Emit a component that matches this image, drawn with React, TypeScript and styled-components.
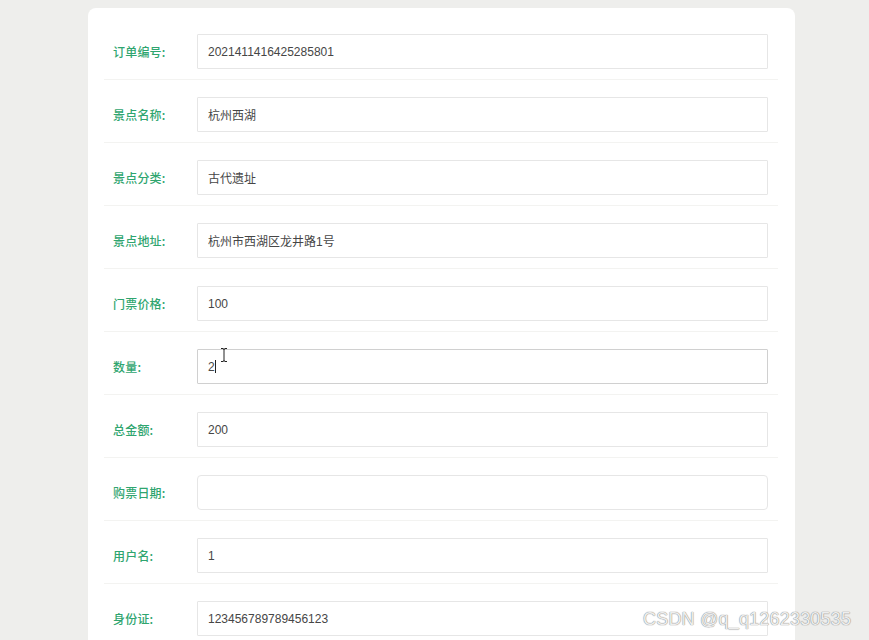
import React from "react";
import styled, { createGlobalStyle } from "styled-components";

const Global = createGlobalStyle`
  html, body {
    margin: 0;
    padding: 0;
    background: #eeeeec;
  }
  body {
    font-family: "Liberation Sans", "Noto Sans CJK SC", Arial, sans-serif;
    overflow: hidden;
  }
`;

const Page = styled.div`
  position: relative;
  width: 869px;
  height: 640px;
  overflow: hidden;
  background: #eeeeec;
`;

const Card = styled.div`
  margin: 8px 0 0 88px;
  width: 707px;
  box-sizing: border-box;
  background: #ffffff;
  border-radius: 8px;
  padding: 9px 17px 0 16px;
  display: flex;
  flex-direction: column;
`;

const Row = styled.div`
  display: flex;
  align-items: center;
  padding: 17px 10px 10px 9px;
  border-bottom: 1px solid #f3f3f1;
`;

const Label = styled.div`
  width: 84px;
  flex: none;
  font-family: "Noto Sans CJK SC", "Liberation Sans", sans-serif;
  font-size: 12px;
  font-weight: 500;
  color: #2fa56f;
  letter-spacing: 0.2px;
  margin-top: -1px;
`;

const Field = styled.div<{ $active?: boolean; $round?: boolean }>`
  position: relative;
  flex: 1;
  height: 35px;
  box-sizing: border-box;
  border: 1px solid ${(p) => (p.$active ? "#d0d0d0" : "#e6e6e6")};
  border-radius: ${(p) => (p.$round ? "4px" : "1px")};
  padding: 0 10px;
  display: flex;
  align-items: center;
  font-family: "Liberation Sans", "Noto Sans CJK SC", sans-serif;
  font-size: 12px;
  color: #464646;
  background: #fff;
`;

const Caret = styled.span`
  display: inline-block;
  width: 1px;
  height: 13px;
  background: #222;
`;

const Cursor = styled.svg`
  position: absolute;
  left: 22px;
  top: -2px;
`;

const Watermark = styled.div`
  position: absolute;
  left: 643px;
  top: 609px;
  font-family: "Liberation Sans", Arial, sans-serif;
  font-size: 18px;
  color: rgba(245, 245, 245, 0.95);
  text-shadow: 0 0 1px #8a8a8a, 0 0 1px #8a8a8a;
  white-space: nowrap;
  letter-spacing: 0.2px;
`;

type Item = { label: string; value: string; active?: boolean; round?: boolean };

const items: Item[] = [
  { label: "订单编号:", value: "2021411416425285801" },
  { label: "景点名称:", value: "杭州西湖" },
  { label: "景点分类:", value: "古代遗址" },
  { label: "景点地址:", value: "杭州市西湖区龙井路1号" },
  { label: "门票价格:", value: "100" },
  { label: "数量:", value: "2", active: true },
  { label: "总金额:", value: "200" },
  { label: "购票日期:", value: "", round: true },
  { label: "用户名:", value: "1" },
  { label: "身份证:", value: "123456789789456123" },
];

export default function App() {
  return (
    <Page>
      <Global />
      <Card>
        {items.map((it) => (
          <Row key={it.label}>
            <Label>{it.label}</Label>
            <Field $active={it.active} $round={it.round}>
              {it.value}
              {it.active && (
                <>
                  <Caret />
                  <Cursor width="8" height="14" viewBox="0 0 8 14">
                    <path
                      d="M1 0.5h2.2M4.8 0.5h2.2M4 1v12M1 13.5h2.2M4.8 13.5h2.2"
                      stroke="#222"
                      strokeWidth="1"
                      fill="none"
                    />
                    <path d="M3 1h2M3 13h2" stroke="#222" strokeWidth="1" />
                  </Cursor>
                </>
              )}
            </Field>
          </Row>
        ))}
      </Card>
      <Watermark>CSDN @q_q1262330535</Watermark>
    </Page>
  );
}
